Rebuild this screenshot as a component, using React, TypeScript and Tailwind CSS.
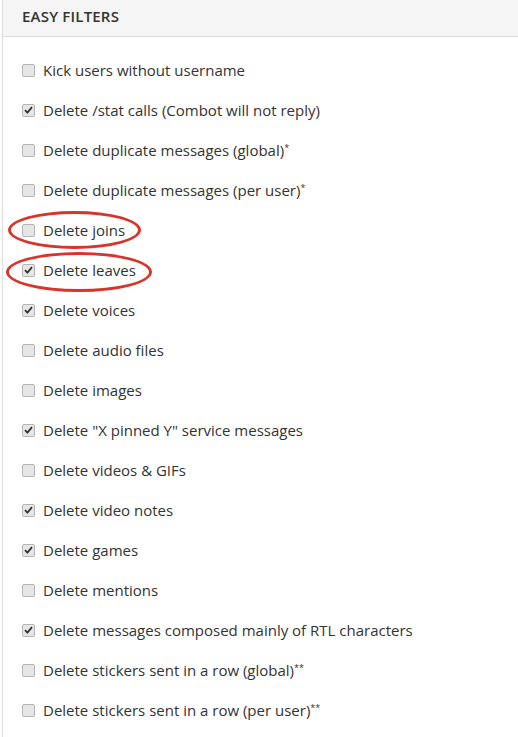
import React from "react";

const items: { label: string; checked: boolean; sup?: string; circle?: "a" | "b" }[] = [
  { label: "Kick users without username", checked: false },
  { label: "Delete /stat calls (Combot will not reply)", checked: true },
  { label: "Delete duplicate messages (global)", checked: false, sup: "*" },
  { label: "Delete duplicate messages (per user)", checked: false, sup: "*" },
  { label: "Delete joins", checked: false, circle: "a" },
  { label: "Delete leaves", checked: true, circle: "b" },
  { label: "Delete voices", checked: true },
  { label: "Delete audio files", checked: false },
  { label: "Delete images", checked: false },
  { label: 'Delete "X pinned Y" service messages', checked: true },
  { label: "Delete videos & GIFs", checked: false },
  { label: "Delete video notes", checked: true },
  { label: "Delete games", checked: true },
  { label: "Delete mentions", checked: false },
  { label: "Delete messages composed mainly of RTL characters", checked: true },
  { label: "Delete stickers sent in a row (global)", checked: false, sup: "**" },
  { label: "Delete stickers sent in a row (per user)", checked: false, sup: "**" },
];

function Box({ checked }: { checked: boolean }) {
  return (
    <span className="relative inline-flex h-[13px] w-[13px] shrink-0 items-center justify-center rounded-[2px] border border-[#b4b4b4] bg-[#e6e6e6]">
      {checked && (
        <svg width="9" height="8" viewBox="0 0 9 8" className="block">
          <path d="M1 4.2 L3.4 6.6 L8 1.2" fill="none" stroke="#333" strokeWidth="1.8" />
        </svg>
      )}
    </span>
  );
}

export default function App() {
  return (
    <div className="h-[737px] w-[518px] bg-white" style={{ fontFamily: '"Open Sans", "Segoe UI", sans-serif' }}>
      <div className="ml-[2px] h-full border-l border-[#dddddd]">
        <div className="flex h-[37px] items-center border-b border-[#dddddd] bg-[#f5f5f5] pb-[4px] pl-[19px]">
          <span className="text-[15px] font-semibold tracking-[0.2px] text-[#333]">EASY FILTERS</span>
        </div>
        <div className="flex flex-col pt-[13px]">
          {items.map((it, i) => (
            <div key={i} className="relative flex h-[40px] items-center gap-[8px] pl-[19px] text-[15px] text-[#333]">
              <Box checked={it.checked} />
              <span className="leading-none">
                {it.label}
                {it.sup && <sup className="relative -top-[5px] text-[9px]">{it.sup}</sup>}
              </span>
              {it.circle === "a" && (
                <span className="pointer-events-none absolute left-[5px] top-[1px] h-[38px] w-[133px] rounded-[50%] border-[3px] border-[#d9342b]" />
              )}
              {it.circle === "b" && (
                <span className="pointer-events-none absolute left-[3px] top-[2px] h-[40px] w-[146px] rounded-[50%] border-[3px] border-[#d9342b]" />
              )}
            </div>
          ))}
        </div>
      </div>
    </div>
  );
}
